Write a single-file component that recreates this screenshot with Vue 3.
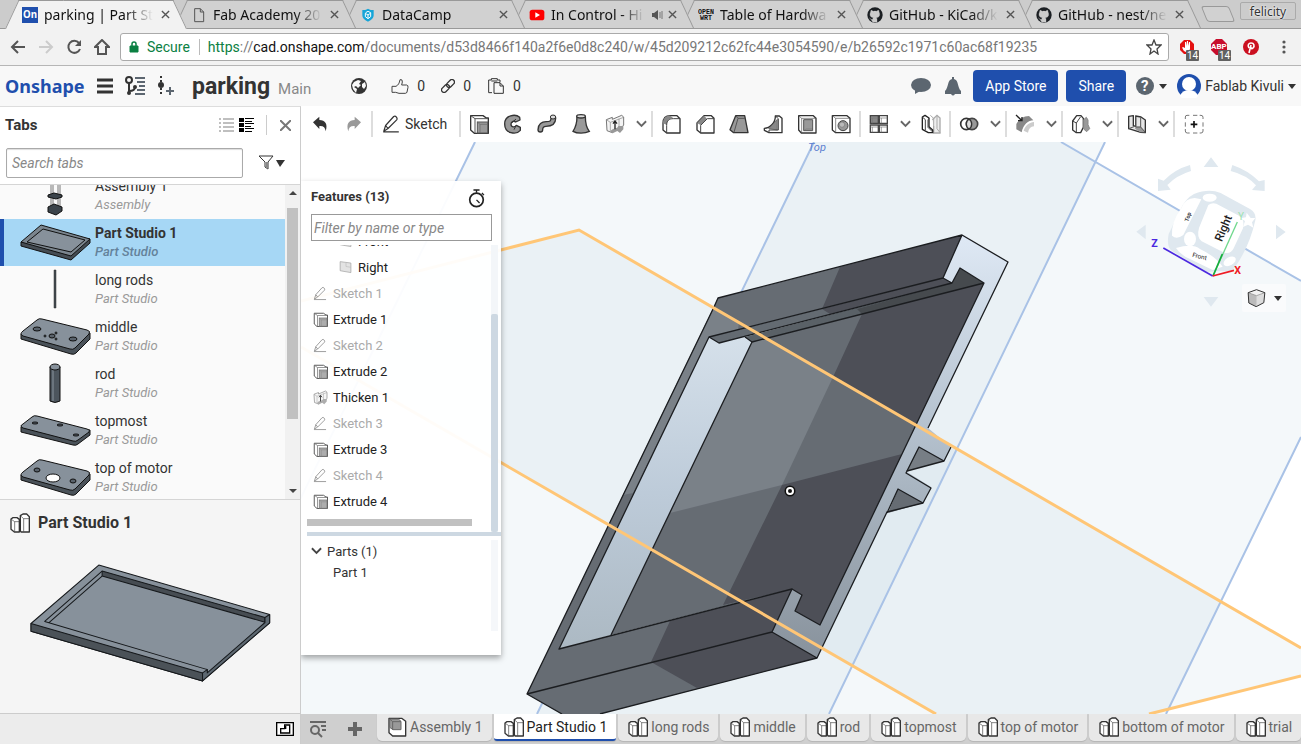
<script setup>
import { ref } from 'vue'

const searchText = ref('')
const filterText = ref('')

const browserTabs = [
  { title: 'parking | Part St', icon: 'onshape', active: true },
  { title: 'Fab Academy 20', icon: 'page' },
  { title: 'DataCamp', icon: 'datacamp' },
  { title: 'In Control - Hi', icon: 'youtube', audio: true },
  { title: 'Table of Hardwa', icon: 'openwrt' },
  { title: 'GitHub - KiCad/k', icon: 'github' },
  { title: 'GitHub - nest/ne', icon: 'github' }
]

const favicons = {
  onshape: '<rect width="48" height="48" fill="#1f4fad"/><text x="3" y="34" font-family="Open Sans, sans-serif" font-size="29" font-weight="700" fill="#fff">On</text>',
  page: '<path d="M11 5h17l10 10v29H11zM28 5v10h10" fill="none" stroke="#555" stroke-width="3"/>',
  datacamp: '<path d="M24 5c6 4 11 4 17 4v16c0 9-8 15-17 19C15 40 7 34 7 25V9c6 0 11 0 17-4z" fill="#15a5d8"/><path d="M17 17l7-4 8 4v12l-8 6-8-6V19l8 5v10m0-10 7-5" fill="none" stroke="#fff" stroke-width="3"/>',
  youtube: '<rect x="2" y="8" width="44" height="32" rx="8" fill="#f00"/><path d="M19 16l14 8-14 8z" fill="#fff"/>',
  openwrt: '<g font-family="Liberation Mono, monospace" font-size="20" font-weight="700" fill="#111"><text x="0" y="20">OPEN</text><text x="6" y="40">WRT</text></g>',
  github: '<circle cx="24" cy="24" r="23" fill="#1b1f23"/><path d="M18 46v-9c-8 2-8-4-11-5M30 46v-9c0-2-1-4-2-5 8-1 10-5 10-10 0-3-1-5-2-7 0-2 0-4-1-5-3 0-5 2-7 3-3-1-6-1-9 0-2-1-4-3-7-3-1 2-1 4-1 5-1 2-2 4-2 7 0 5 2 9 10 10-1 1-2 3-1 5v9" fill="#ccc" stroke="#ccc" stroke-width="1"/>'
}

const icons = {
  extrude: '<path d="M5 5h37l10 7h6v46H16L5 48z" fill="#fff" stroke="#333" stroke-width="4" stroke-linejoin="round"/><path d="M5 5l13 9h38M18 14v44" fill="none" stroke="#555" stroke-width="3"/><rect x="25" y="24" width="31" height="33" fill="#999" stroke="#555" stroke-width="3"/><path d="M25 24l8 7h23M33 31v26" fill="none" stroke="#666" stroke-width="2"/>',
  revolve: '<path d="M50 10C38-1 5 2 5 30c0 29 34 34 47 19v-9l-12-6c-5 7-16 6-16-3 0-8 8-12 14-7l13-6z" fill="#999" stroke="#333" stroke-width="4" stroke-linejoin="round"/><path d="M39 15 27 26m12 9-6 12" stroke="#333" stroke-width="3" fill="none"/>',
  sweep: '<path d="M10 47c0-12 8-17 17-17 14 0 22-3 22-17" fill="none" stroke="#333" stroke-width="18" stroke-linecap="round"/><path d="M10 47c0-12 8-17 17-17 14 0 22-3 22-17" fill="none" stroke="#999" stroke-width="10" stroke-linecap="round"/><ellipse cx="48" cy="9" rx="8" ry="6" fill="#ddd" stroke="#333" stroke-width="3"/>',
  loft: '<path d="M18 7C18 28 13 42 6 52c12 7 36 7 49 0C46 42 43 28 43 7" fill="#999" stroke="#333" stroke-width="4"/><ellipse cx="30" cy="7" rx="13" ry="5" fill="#ddd" stroke="#333" stroke-width="4"/>',
  thicken: '<path d="M4 17l18-7v6L50 4l6 5v24L44 48l-8-5-14 13-16-6z" fill="#f4f4f4" stroke="#777" stroke-width="3" stroke-linejoin="round"/><path d="M16 54c4-14 20-6 24-18h15v10L45 57l-8-6-14 7z" fill="#999"/><path d="M4 17l12 8 16-6 24-9M16 25v26M42 14v22" fill="none" stroke="#888" stroke-width="2"/><path d="M30 46V21m-6 8 6-8 6 8" fill="none" stroke="#222" stroke-width="4"/>',
  fillet: '<path d="M6 28C6 10 16 5 28 5h20l9 9v43H17L6 48z" fill="#fff" stroke="#333" stroke-width="4" stroke-linejoin="round"/><path d="M6 28C6 10 16 5 28 5l9 8c-14 0-19 8-19 20z" fill="#888"/><path d="M17 57V34c0-14 7-20 20-20h20" fill="none" stroke="#444" stroke-width="3"/>',
  chamfer: '<path d="M6 27 27 5h22l8 8v44H17L6 48z" fill="#fff" stroke="#333" stroke-width="4" stroke-linejoin="round"/><path d="M6 27 27 5l9 9-18 20z" fill="#888"/><path d="M17 57V34l20-20h20" fill="none" stroke="#444" stroke-width="3"/>',
  draft: '<path d="M20 5h27l10 51H14L3 47z" fill="#999" stroke="#333" stroke-width="4" stroke-linejoin="round"/><path d="M20 5l7 8h22M27 13 15 55" fill="none" stroke="#555" stroke-width="3"/>',
  rib: '<path d="M4 43c17 0 34-18 33-37h12l8 7v43H18L4 49z" fill="#fff" stroke="#333" stroke-width="4" stroke-linejoin="round"/><path d="M17 44 43 16v32z" fill="#888" stroke="#555" stroke-width="2"/><path d="M37 6l9 8v34H18v8" fill="none" stroke="#444" stroke-width="3"/>',
  shell: '<path d="M5 5h44l8 8v44H13L5 48z" fill="#fff" stroke="#333" stroke-width="4" stroke-linejoin="round"/><path d="M5 5l9 8h43M14 13v44" fill="none" stroke="#555" stroke-width="2"/><path d="M20 17h27v33H20z" fill="#999" stroke="#555" stroke-width="3"/><path d="M20 50l7-5h20" fill="none" stroke="#555"/>',
  hole: '<path d="M4 5h44l9 8v43H14L4 48z" fill="#fff" stroke="#333" stroke-width="4" stroke-linejoin="round"/><path d="M4 5l10 8h43M14 13v43" fill="none" stroke="#555" stroke-width="2"/><circle cx="36" cy="35" r="15" fill="#999" stroke="#444" stroke-width="3"/><circle cx="33" cy="32" r="8" fill="#bbb" stroke="#777" stroke-width="2"/>',
  pattern: '<g fill="#fff" stroke="#444" stroke-width="4"><path d="M4 5h24v23H4z" fill="#888"/><path d="M31 5h24v23H31zM4 33h24v22H4zM31 33h24v22H31z"/></g><path d="M4 12h24M31 12h24M4 39h24M31 39h24M10 12v16M37 12v16M10 39v16M37 39v16" stroke="#777" stroke-width="2"/>',
  mirror: '<path d="M34 17l14-13 9 8v45H38V36" fill="#eee" stroke="#aaa" stroke-width="4"/><path d="M48 4v40l9 12M28 4l10 9v24" fill="none" stroke="#aaa" stroke-width="3"/><path d="M4 9 12 4l12 8v26l11 10v8H22L4 46z" fill="#fff" stroke="#222" stroke-width="4" stroke-linejoin="round"/><path d="M4 9l9 8v31M24 12l-3 6v22l14 14" fill="none" stroke="#444" stroke-width="3"/>',
  bool: '<circle cx="22" cy="30" r="17" fill="#fff" stroke="#333" stroke-width="5"/><circle cx="39" cy="30" r="17" fill="#999" stroke="#444" stroke-width="5"/><path d="M30 15a18 18 0 0 1 0 30 18 18 0 0 1 0-30z" fill="#ddd" stroke="#333" stroke-width="4"/>',
  split: '<path d="M4 30C12 15 26 6 42 6l13 13C40 19 25 31 20 55L4 46z" fill="#888"/><path d="M26 50c4-14 15-24 31-26v13c-10 1-16 7-18 19z" fill="#ccc"/><path d="M3 3l18 17m0-11v11H9" fill="none" stroke="#222" stroke-width="4"/>',
  offset: '<path d="M5 21 17 5h13l7 8v27l-8 16H16L5 48z" fill="#fff" stroke="#333" stroke-width="4" stroke-linejoin="round"/><path d="M5 21l11 6 13-19M16 27v28" fill="none" stroke="#444" stroke-width="3"/><path d="M38 17l8-7 5 8v14l5 12-9 9-9-8z" fill="#999" stroke="#888" stroke-width="3" stroke-linejoin="round"/>',
  modify: '<path d="M5 7l14-2v30l7 2V6l16 3 13 9v38l-14-1L5 44z" fill="#e6e6e6" stroke="#333" stroke-width="4" stroke-linejoin="round"/><path d="M26 38h15l14 17H40L24 44z" fill="#999"/><path d="M26 6v33h15l14 16M41 10v29M5 44l16-6" fill="none" stroke="#555" stroke-width="3"/>',
  add: '<path d="M4 15V9q0-5 5-5h7m11 0h13m7 0h4q6 0 6 6v5m0 10v13m0 7v6q0 6-6 6h-4m-7 0H27m-10 0h-7q-6 0-6-6v-6m0-7V25" fill="none" stroke="#777" stroke-width="3"/><path d="M30 21v20M20 31h20" stroke="#111" stroke-width="5"/>',
  sketch: '<path d="M4 56h52M6 54l6-19L39 5q5-3 9 2t1 9L20 45zM12 35l8 10" fill="none" stroke="#333" stroke-width="4" stroke-linejoin="round"/>',
  undo: '<path d="M9 25 28 8v10c18 0 26 12 19 34-1-12-7-17-19-16v9z" fill="#333"/>',
  redo: '<path d="M51 25 32 8v10C14 18 6 30 13 52c1-12 7-17 19-16v9z" fill="#999"/>',
  part: '<path d="M3 18 9 14h12l7 5V57H13L3 49zM31 8l8-5h11l8 8v46H33l-2-4z" fill="#fff" stroke="#333" stroke-width="4" stroke-linejoin="round"/><path d="M4 19l10 7h13M14 26v30M32 9l9 8h16M41 17v39" fill="none" stroke="#444" stroke-width="2"/>',
  assembly: '<path d="M6 4h38l12 9v44H17L6 47z" fill="#fff" stroke="#333" stroke-width="4" stroke-linejoin="round"/><path d="M8 6h26l8 7v25H18L8 31z" fill="#999" stroke="#666" stroke-width="3"/><path d="M8 6l9 8h25M17 14v24" fill="none" stroke="#666" stroke-width="3"/>',
  plane: '<path d="M5 7l46 6v41L5 46z" fill="#ddd" stroke="#888" stroke-width="3"/><path d="M30 12v16l20 3" fill="none" stroke="#999" stroke-width="2"/>'
}

const toolGroups = [
  ['extrude', 'revolve', 'sweep', 'loft', 'thicken', 'chev'],
  ['fillet', 'chamfer', 'draft', 'rib', 'shell', 'hole'],
  ['pattern', 'chev', 'mirror'],
  ['bool', 'chev'],
  ['split', 'chev'],
  ['offset', 'chev'],
  ['modify', 'chev']
]

const plate = (holes) =>
  `<path d="M1 18v5l50 15q3 1 5-1L70 23v-6z" fill="#4a5259" stroke="#111"/><path d="M3 15 17 4q2-2 5-1l45 11q4 1 2 4L55 32q-2 2-5 1L3 20q-4-2 0-5z" fill="#87919b" stroke="#111"/>${holes}`
const hole = (x, y, rx, ry) => `<ellipse cx="${x}" cy="${y}" rx="${rx}" ry="${ry}" fill="#59626b" stroke="#111"/>`

const thumbs = {
  assembly: '<path d="M31 0v34m2-34v34m5-34v34m2-34v34" stroke="#777"/><path d="M28 20l6-2 8 2v2l-6 2-8-2zM28 32l6-3 8 3v4l-6 4-8-3z" fill="#3b434a" stroke="#111"/>',
  tray: '<path d="M1 20v4l50 14 19-17v-4z" fill="#454c53" stroke="#111"/><path d="M1 20 21 3l49 14-19 17z" fill="#7b858e" stroke="#111"/><path d="M7 20 23 7l42 11-14 12z" fill="#87919b" stroke="#111"/>',
  longrod: '<path d="M34 1h2v38h-2z" fill="#414a50" stroke="#333" stroke-width=".5"/>',
  middle: plate(hole(17, 13, 4, 2) + hole(53, 23, 4, 2) + hole(32, 20, 3, 2) + hole(25, 20, 1, 1) + hole(36, 17, 1, 1) + hole(36, 23, 1, 1)),
  rod: '<path d="M30 4v34q5 3 10 0V4z" fill="#4c555d" stroke="#111"/><path d="M33 6v32" stroke="#6b757e" stroke-width="2"/><ellipse cx="35" cy="4" rx="5" ry="3" fill="#87919b" stroke="#111"/>',
  topmost: '<path d="M1 17v5l52 13q3 1 5-1l12-9v-5z" fill="#4a5259" stroke="#111"/><path d="M3 14 12 7q2-2 5-1l50 13q4 1 2 3l-11 8q-2 2-5 1L3 18q-4-2 0-4z" fill="#87919b" stroke="#111"/>' + hole(15, 13, 3, 1) + hole(40, 15, 3, 1) + hole(56, 25, 3, 1),
  motor: plate(hole(17, 13, 3, 2) + hole(53, 24, 3, 2) + '<ellipse cx="33" cy="21" rx="7" ry="4" fill="#fff" stroke="#111"/>')
}

const docs = [
  { name: 'Assembly 1', kind: 'Assembly', thumb: 'assembly' },
  { name: 'Part Studio 1', kind: 'Part Studio', thumb: 'tray', active: true },
  { name: 'long rods', kind: 'Part Studio', thumb: 'longrod' },
  { name: 'middle', kind: 'Part Studio', thumb: 'middle' },
  { name: 'rod', kind: 'Part Studio', thumb: 'rod' },
  { name: 'topmost', kind: 'Part Studio', thumb: 'topmost' },
  { name: 'top of motor', kind: 'Part Studio', thumb: 'motor' }
]

const features = [
  { name: 'Front', icon: 'plane', nested: true },
  { name: 'Right', icon: 'plane', nested: true },
  { name: 'Sketch 1', icon: 'sketch', dim: true },
  { name: 'Extrude 1', icon: 'extrude' },
  { name: 'Sketch 2', icon: 'sketch', dim: true },
  { name: 'Extrude 2', icon: 'extrude' },
  { name: 'Thicken 1', icon: 'thicken' },
  { name: 'Sketch 3', icon: 'sketch', dim: true },
  { name: 'Extrude 3', icon: 'extrude' },
  { name: 'Sketch 4', icon: 'sketch', dim: true },
  { name: 'Extrude 4', icon: 'extrude' }
]

const pageTabs = ['Assembly 1', 'Part Studio 1', 'long rods', 'middle', 'rod', 'topmost', 'top of motor', 'bottom of motor', 'trial']
</script>

<template>
  <div class="window">
    <div class="tabstrip">
      <div class="browser-tabs">
        <div v-for="(t, i) in browserTabs" :key="i" class="btab" :class="{ active: t.active }" :style="{ zIndex: 10 - i }">
          <svg class="favicon" viewBox="0 0 48 48" v-html="favicons[t.icon]"></svg>
          <span class="btitle">{{ t.title }}</span>
          <svg v-if="t.audio" class="audio" viewBox="0 0 12 12"><path d="M1 4h2l4-3v10L3 8H1z" fill="#555" /><path d="M9 3v6M11 2v8" stroke="#777" /></svg>
          <button class="bclose" aria-label="Close tab"><svg viewBox="0 0 10 10"><path d="M1 1l8 8M9 1 1 9" stroke="#555" stroke-width="1.5" /></svg></button>
        </div>
      </div>
      <button class="newtab" aria-label="New tab"></button>
      <button class="profile">felicity</button>
    </div>

    <div class="navbar">
      <button class="nav" aria-label="Back"><svg viewBox="0 0 16 16"><path d="M15 8H2m6-6L2 8l6 6" fill="none" stroke="#555" stroke-width="2" /></svg></button>
      <button class="nav" aria-label="Forward"><svg viewBox="0 0 16 16"><path d="M1 8h13M8 2l6 6-6 6" fill="none" stroke="#ccc" stroke-width="2" /></svg></button>
      <button class="nav" aria-label="Reload"><svg viewBox="0 0 16 16"><path d="M13 4a6 6 0 1 0 1 6" fill="none" stroke="#555" stroke-width="2" /><path d="M15 1v6H9z" fill="#555" /></svg></button>
      <button class="nav" aria-label="Home"><svg viewBox="0 0 16 16"><path d="M8 1 1 8h3v7h8V8h3z" fill="none" stroke="#555" stroke-width="2" /></svg></button>
      <div class="address">
        <svg class="lock" viewBox="0 0 10 12"><path d="M1 5h8v6H1z" fill="#0b8043" stroke="#0b8043" /><path d="M3 5V3a2 2 0 0 1 4 0v2" fill="none" stroke="#0b8043" stroke-width="1.5" /></svg>
        <span class="secure">Secure</span>
        <span class="url"><span class="scheme">https</span>://<b>cad.onshape.com</b>/documents/d53d8466f140a2f6e0d8c240/w/45d209212c62fc44e3054590/e/b26592c1971c60ac68f19235</span>
        <button class="star" aria-label="Bookmark"><svg viewBox="0 0 16 16"><path d="M8 1l2 5h5l-4 4 1 5-4-3-4 3 1-5-4-4h5z" fill="none" stroke="#444" stroke-width="1.3" /></svg></button>
      </div>
      <button class="ext first" aria-label="AdBlock"><svg viewBox="0 0 16 16"><path d="M5 1h6l4 4v6l-4 4H5l-4-4V5z" fill="#e41111" /><path d="M5 12c-2-3-2-4-1-4l2 1V3h1v4l1-5h1v5l1-4h1v7l-2 4" fill="#fff" /></svg><span class="count">14</span></button>
      <button class="ext" aria-label="Adblock Plus"><svg viewBox="0 0 16 16"><path d="M5 0h6l5 5v6l-5 5H5l-5-5V5z" fill="#c70d2c" /><text x="0" y="10" font-family="Roboto, sans-serif" font-size="8" font-weight="700" fill="#fff">ABP</text></svg><span class="count">14</span></button>
      <button class="ext" aria-label="Pinterest"><svg viewBox="0 0 16 16"><circle cx="8" cy="8" r="8" fill="#cb1020" /><path d="M6 9C4 6 6 4 8 4c3 0 4 3 2 5-1 1-2 1-2-1M8 6l-2 8" fill="none" stroke="#fff" stroke-width="1.6" /></svg></button>
      <button class="dots" aria-label="Menu"><svg viewBox="0 0 4 16"><g fill="#555"><circle cx="2" cy="3" r="1.600" /><circle cx="2" cy="8" r="1.600" /><circle cx="2" cy="13" r="1.600" /></g></svg></button>
    </div>

    <header class="header">
      <a class="brand" href="#">Onshape</a>
      <button class="hbtn" aria-label="Menu"><svg class="i20" viewBox="0 0 20 20"><path d="M2 4h16M2 10h16M2 16h16" stroke="#333" stroke-width="3" /></svg></button>
      <button class="hbtn" aria-label="Versions"><svg class="i20" viewBox="0 0 20 20"><circle cx="4" cy="4" r="3" fill="none" stroke="#333" stroke-width="2" /><circle cx="4" cy="17" r="2" fill="#333" /><circle cx="10" cy="11" r="2" fill="#333" /><path d="M4 7v9M10 11q0 4-6 4" fill="none" stroke="#333" stroke-width="2" /><path d="M10 2h10M12 6h8M14 10h6M12 14h8M10 18h10" stroke="#5c6670" stroke-width="2" /></svg></button>
      <button class="hbtn" aria-label="Create version"><svg class="i20" viewBox="0 0 20 20"><path d="M6 0v20" stroke="#333" stroke-width="2" stroke-dasharray="2 2" /><circle cx="6" cy="9" r="3" fill="#333" /><path d="M15 11v8M11 15h8" stroke="#5c6670" stroke-width="2" /></svg></button>
      <h1>parking</h1><span class="branch">Main</span>
      <div class="stats">
        <svg class="globe" viewBox="0 0 16 16"><circle cx="8" cy="8" r="8" fill="#333" /><path d="M3 4l4-2 3 1-2 3 2 1-3 3-2-2-2 1 3 2-1 4-3-4-1-4zM11 6l3-2 1 4-2 3-2-2z" fill="#f8f8f8" /></svg>
        <button class="stat"><svg class="thumb" viewBox="0 0 54 48"><path d="M3 25h12c7-4 10-9 12-20q8-2 7 7l-2 9h15q5 1 4 7l-3 14q-1 4-5 4H24L14 43H3z" fill="none" stroke="#444" stroke-width="3" /></svg>0</button>
        <button class="stat"><svg class="link" viewBox="0 0 14 14"><g fill="none" stroke="#333" stroke-width="1.300"><rect x="5" y="2" width="9" height="5" rx="2.500" transform="rotate(-45 9.500 4.500)" /><rect x="0" y="7" width="9" height="5" rx="2.500" transform="rotate(-45 4.500 9.500)" /></g></svg>0</button>
        <button class="stat"><svg class="copy" viewBox="0 0 48 48"><path d="M12 44H2V6h8V2h18v4h8v6" fill="none" stroke="#333" stroke-width="3" /><path d="M18 14h18l10 10v22H18zM36 14v10h10M10 9h18" fill="#f8f8f8" stroke="#333" stroke-width="3" /></svg>0</button>
      </div>
      <div class="account">
        <button class="hbtn" aria-label="Comments"><svg class="i20" viewBox="0 0 20 20"><ellipse cx="10" cy="9" rx="10" ry="7" fill="#5c6670" /><path d="M4 12v6l7-4z" fill="#5c6670" /></svg></button>
        <button class="hbtn bell" aria-label="Notifications"><svg class="i20" viewBox="0 0 20 20"><path d="M9 1h2v2c5 1 3 8 7 12v3H2v-3c4-4 2-11 7-12zM8 18h4q-2 3-4 0" fill="#5c6670" /></svg></button>
        <button class="primary">App Store</button>
        <button class="primary">Share</button>
        <button class="help" aria-label="Help"><svg class="i20" viewBox="0 0 20 20"><circle cx="10" cy="10" r="9" fill="#5c6670" /><text x="6" y="15" font-family="Roboto, sans-serif" font-size="15" font-weight="700" fill="#fff">?</text></svg><i class="caret"></i></button>
        <button class="user"><svg class="avatar" viewBox="0 0 24 24"><circle cx="12" cy="12" r="12" fill="#1f4fad" /><circle cx="12" cy="10" r="7" fill="#fff" /><path d="M3 22q2-6 9-6t9 6l-2 2H5z" fill="#fff" /></svg>Fablab Kivuli<i class="caret"></i></button>
      </div>
    </header>

    <main class="body">
      <aside class="sidebar">
        <div class="side-head">
          <h2>Tabs</h2>
          <button class="view" aria-label="Compact list"><svg class="i15" viewBox="0 0 15 15"><path d="M0 1h2M4 1h11M0 5h2M4 5h11M0 9h2M4 9h11M0 13h2M4 13h11" stroke="#aaa" stroke-width="1.500" /></svg></button>
          <button class="view" aria-label="Detailed list"><svg class="i15" viewBox="0 0 15 15"><path d="M0 0h5v4H0zM0 5h5v4H0zM0 10h5v4H0z" fill="#000" /><path d="M6 .5h9M6 3.500h7M6 5.500h9M6 8.500h6M6 10.500h9M6 13.500h7" stroke="#000" /></svg></button>
          <button class="close" aria-label="Close panel"><svg viewBox="0 0 10 10"><path d="M0 0l10 10M10 0 0 10" stroke="#777" stroke-width="1.800" /></svg></button>
        </div>
        <div class="side-search">
          <input v-model="searchText" type="text" placeholder="Search tabs" aria-label="Search tabs" />
          <button class="filter" aria-label="Filter"><svg viewBox="0 0 28 16"><path d="M1 1h14l-5 6v7l-3-2V7z" fill="#fff" stroke="#333" /><path d="M8 7h2v7l-2-2z" fill="#888" /><path d="M18 5h9l-5 7z" fill="#333" /></svg></button>
        </div>
        <div class="doc-pane">
          <ul class="doc-list">
            <li v-for="d in docs" :key="d.name" :class="{ active: d.active }">
              <svg class="doc-thumb" viewBox="0 0 71 41" v-html="thumbs[d.thumb]"></svg>
              <div class="doc-text"><div class="doc-name">{{ d.name }}</div><div class="doc-kind">{{ d.kind }}</div></div>
            </li>
          </ul>
          <div class="scrollbar"><i class="up"></i><div class="track"><div class="handle"></div></div><i class="down"></i></div>
        </div>
        <section class="preview">
          <h3><svg class="i20" viewBox="0 0 60 60" v-html="icons.part"></svg>Part Studio 1</h3>
          <svg class="preview-art" viewBox="80 180 740 380">
            <g stroke="#15181b" stroke-width="3" stroke-linejoin="round">
              <path d="M92 370 295 195 807 343v25L606 542 92 393z" fill="#87919b" />
              <path d="M92 370v23l514 149v-24z" fill="#4b5258" />
              <path d="M305 213v15l488 138v-14z" fill="#464c52" />
              <path d="M305 213 133 364l480 142 7 2v13M305 228 145 368" fill="none" />
              <path d="M606 518v24l201-174v-25l-14 9v15L620 518v-10z" fill="#5d6871" />
            </g>
          </svg>
        </section>
        <div class="side-foot"><svg viewBox="0 0 54 42"><path d="M2 2h50v38H2z" fill="#fff" stroke="#000" stroke-width="4" /><path d="M14 20h12V9h15v24H14zM29 12v9" fill="none" stroke="#000" stroke-width="4" /></svg></div>
      </aside>

      <section class="work">
        <div class="toolbar">
          <button class="tool" aria-label="Undo"><svg class="i20" viewBox="0 0 60 60" v-html="icons.undo"></svg></button>
          <button class="tool" aria-label="Redo"><svg class="i20" viewBox="0 0 60 60" v-html="icons.redo"></svg></button>
          <button class="tool-sketch"><svg class="i18" viewBox="0 0 60 60" v-html="icons.sketch"></svg>Sketch</button>
          <div v-for="(g, gi) in toolGroups" :key="gi" class="group">
            <button v-for="(n, ni) in g" :key="ni" :class="n === 'chev' ? 'chev' : 'tool'" :aria-label="n === 'chev' ? 'More' : n">
              <svg v-if="n === 'chev'" viewBox="0 0 12 8"><path d="M1 1l5 5 5-5" fill="none" stroke="#666" stroke-width="2" /></svg>
              <svg v-else class="i20" viewBox="0 0 60 60" v-html="icons[n]"></svg>
            </button>
          </div>
          <button class="tool add" aria-label="Add tool"><svg class="i20" viewBox="0 0 60 60" v-html="icons.add"></svg></button>
        </div>

        <div class="canvas">
          <svg class="scene" viewBox="301 142 1000 572" preserveAspectRatio="xMinYMin slice">
            <defs>
              <linearGradient id="wall" x1="0" y1="0" x2="0" y2="1"><stop offset="0" stop-color="#d5e0ea" /><stop offset=".5" stop-color="#bdcbd9" /><stop offset="1" stop-color="#acb9c3" /></linearGradient>
              <linearGradient id="end" x1="0" y1="0" x2="0" y2="1"><stop offset="0" stop-color="#dfe9f5" /><stop offset=".4" stop-color="#b9c6d3" /><stop offset="1" stop-color="#88929c" /></linearGradient>
            </defs>
            <g fill="#90b7cd" fill-opacity=".1">
              <path d="M475 142h630L829 714H195z" />
              <path d="M814 142h247l240 139v156L1166 714H537z" />
              <path d="M579 230l722 418v28l-152 38H936L301 347v-46z" />
            </g>
            <g fill="none" stroke="#a9c2e6" stroke-width="2">
              <path d="M475 142 195 714M814 142 537 714M1105 142 829 714M1061 142l240 139M1301 437 1166 714" />
            </g>
            <text class="plane-label" transform="translate(808 151)">Top</text>

            <path d="M718 298l244-63-19 43-234 59-150 312 233-60-20 43-245 62z" fill="#666c73" />
            <path d="M714 308l25 14-1 8-29 7-76 156-10 2z" fill="#7a8188" />
            <path d="M840 267l122-32-19 43-121 31zM670 621l122-32-20 43-121 30z" fill="#4d4f57" />
            <path d="M527 694l245-62 45 26-217 56h-38z" fill="#666c73" />
            <path d="M651 662l121-30 45 26-120 30z" fill="#4d4f57" />
            <path d="M752 342l232-59-164 342-25-14 7-16-10-6-181 46z" fill="#666c73" />
            <path d="M752 342l16-4 65 39-51 108-112 28z" fill="#7a8188" />
            <path d="M862 314l122-31-67 142-84-48zM782 485l120-31-82 171-25-14 7-16-10-6-69 16z" fill="#4d4f57" />
            <path d="M709 337l10 6 26-6 7 5-141 293-52 14z" fill="url(#wall)" />
            <path d="M709 337l234-59 9 5-233 60z" fill="#646b72" />
            <path d="M822 309l121-31 9 5-122 31z" fill="#4d4f57" />
            <path d="M745 337l207-54 8-15 24 15-232 59z" fill="#5a6167" />
            <path d="M857 309l95-26 8-15 24 15-122 31z" fill="#464a4e" />
            <path d="M962 235l46 27-80 166 23 19-7 14-25-14-12 25 24 15-8 16-25-14-11 23L817 658l-45-26 20-43 10 6-7 16 25 14 164-342-24-15-8 15-9-5z" fill="url(#end)" />
            <path d="M919 447l25 14-37 10z" fill="#777e85" />
            <path d="M898 489l25 14-35 10z" fill="#666c73" />
            <g fill="none" stroke="#1b1d20" stroke-width="1.300" stroke-linejoin="round">
              <path d="M562 714l-35-20 187-387 4-9 244-63 46 27-80 166M951 447l-7 14-37 10-1 2 25 15-8 15-36 9L817 658l-217 56M527 694l245-62 45 26M772 632l20-43-233 60 150-312 234-59 19-43" />
              <path d="M709 337l10 6 233-60 8-15 24 15-164 342-25-14 7-16-10-6M943 278l9 5M745 337l7 5 232-59M752 342 611 635M944 461l-25-14-12 24M923 503l-25-14-11 24" />
            </g>
            <g fill="none" stroke="#ffc676" stroke-width="3"><path d="M301 301l278-71 722 418M301 347l635 367M1149 714l152-38" /></g>
            <circle cx="790" cy="491" r="4" fill="#111" stroke="#111" stroke-width="3" /><circle cx="790" cy="491" r="3" fill="#111" stroke="#fff" stroke-width="2" />
          </svg>

          <svg class="cube" viewBox="0 6 603 564">
            <g fill="#dfe8ef">
              <path d="M333 52l22 29h-44zM333 500l22-29h-44zM109 275l28-21v44zM557 276l-29-22v44z" />
              <path d="M270 75q-46 13-79 47l-17-6v37l38-4-10-14q28-29 71-42zM397 75q47 16 80 49l17-4v33l-38-3 12-14q-28-31-76-43z" />
              <path d="M282 162q45-18 80-3l88 48q20 12 16 34-18 80-61 140-10 16-40 12l-47 3-103-64q-16-12-9-50l34-70q15-36 42-50z" />
            </g>
            <g fill="#fff">
              <path d="M244 204q12-30 40-30l20 4-54 107q-20 15-34 2-3-40 28-83z" />
              <path d="M325 195q10-8 24-4l68 36q18 10 12 38l-28 60q-8 18-28 13l-68-34q-16-12-8-40z" />
              <path d="M228 324q50-15 72 3 48 23 68 53l-30 10-82-40q-20-12-28-26z" />
              <ellipse cx="329" cy="173" rx="21" ry="12" /><ellipse cx="270" cy="297" rx="18" ry="22" /><ellipse cx="389" cy="364" rx="20" ry="12" transform="rotate(-30 389 364)" />
              <path d="M440 218l12 16 14 0-10 13 4 16-16-9-15 7 6-18-14-8 17-3z" />
            </g>
            <path d="M412 246 340 406" stroke="#70d88d" stroke-width="4" /><path d="M367 342 339 408" stroke="#16ac3d" stroke-width="5" />
            <path d="M190 324 338 408" stroke="#4b28e0" stroke-width="5" /><path d="M338 408l64-17" stroke="#ef1b24" stroke-width="5" />
            <g class="cube-text">
              <text x="0" y="0" font-size="35" font-weight="500" fill="#222" transform="translate(365 307) rotate(-67)">Right</text>
              <text x="0" y="0" font-size="19" fill="#222" transform="translate(276 350) rotate(14)">Front</text>
              <text x="0" y="0" font-size="17" font-weight="700" fill="#333" transform="translate(265 246) rotate(-72)">Top</text>
              <text x="154" y="320" font-size="32" font-weight="700" fill="#4b28e0">Z</text>
              <text x="403" y="401" font-size="32" font-weight="700" fill="#ef1b24">X</text>
              <text x="414" y="239" font-size="30" fill="#9be2ae">Y</text>
            </g>
          </svg>
          <button class="shade" aria-label="Display style"><svg viewBox="0 0 54 54"><path d="M2 11 27 2l25 9-3 30-23 12L4 42z" fill="#ddd" /><path d="M2 11l25-9 25 9-25 9z" fill="#f2f2f2" /><path d="M2 11l25 9v32L4 42z" fill="#bbb" /><path d="M2 11l25 9 25-9" fill="none" stroke="#888" stroke-width="2" /><path d="M2 11 27 2l25 9-3 30-23 12L4 42z" fill="none" stroke="#333" stroke-width="3" /></svg><i class="caret"></i></button>

          <div class="features">
            <div class="feat-head"><h2>Features (13)</h2><svg class="timer" viewBox="0 0 50 56"><circle cx="25" cy="32" r="20" fill="none" stroke="#222" stroke-width="5" /><path d="M16 3h18M25 3v8M41 12l6 6M25 32l9 9" stroke="#222" stroke-width="4" /></svg></div>
            <input v-model="filterText" type="text" placeholder="Filter by name or type" aria-label="Filter by name or type" />
            <div class="feat-pane">
              <ul class="feat-list">
                <li v-for="f in features" :key="f.name" :class="{ dim: f.dim, nested: f.nested }"><svg class="i15" viewBox="0 0 60 60" v-html="icons[f.icon]"></svg>{{ f.name }}</li>
              </ul>
              <div class="feat-track"><div class="feat-handle"></div></div>
            </div>
            <div class="parts">
              <div class="parts-text"><button class="parts-head"><svg viewBox="0 0 12 8"><path d="M1 1l5 5 5-5" fill="none" stroke="#444" stroke-width="2" /></svg>Parts (1)</button><div class="part">Part 1</div></div>
              <div class="parts-track"></div>
            </div>
          </div>
        </div>

        <nav class="page-tabs">
          <button class="pt-tool" aria-label="Tab manager"><svg class="i18" viewBox="0 0 18 18"><path d="M1 2h16M12 6h5M13 10h4" stroke="#666" stroke-width="2" /><circle cx="6" cy="10" r="4" fill="none" stroke="#666" stroke-width="2" /><path d="M9 13l4 4" stroke="#666" stroke-width="2" /></svg></button>
          <button class="pt-tool" aria-label="Add tab"><svg class="i18" viewBox="0 0 18 18"><path d="M9 2v14M2 9h14" stroke="#666" stroke-width="4" /></svg></button>
          <button v-for="(p, i) in pageTabs" :key="p" class="ptab" :class="{ active: i === 1 }"><svg class="i20" viewBox="0 0 60 60" v-html="i === 0 ? icons.assembly : icons.part"></svg>{{ p }}</button>
        </nav>
      </section>
    </main>
  </div>
</template>

<style>
body { margin: 0; }
</style>

<style scoped>
* { box-sizing: border-box; }
.window { display: flex; flex-direction: column; height: 100vh; overflow: hidden; font-family: Roboto, "Noto Sans", sans-serif; font-size: 14px; color: #333; background: #fff; }
button { border: 0; padding: 0; margin: 0; background: none; font: inherit; color: inherit; display: flex; align-items: center; justify-content: center; flex: none; }
svg { display: block; flex: none; }
h1, h2, h3, ul { margin: 0; padding: 0; list-style: none; }
.i20 { width: 20px; height: 20px; }
.i18 { width: 18px; height: 18px; }
.i15 { width: 15px; height: 15px; }
.caret { border: 4px solid transparent; border-top: 5px solid #333; border-bottom: 0; }

.tabstrip { height: 29px; flex: none; display: flex; background: #ccc; border-bottom: 1px solid #999; padding-left: 5px; font-family: "Noto Sans", sans-serif; color: #111; }
.browser-tabs { display: flex; flex: 0 1 1183px; min-width: 0; margin-right: 16px; }
.btab { flex: 1 1 0; min-width: 0; position: relative; height: 29px; margin-right: -13px; padding: 0 13px 0 17px; display: flex; align-items: center; }
.btab::before, .btab::after { content: ""; position: absolute; top: 0; bottom: 1px; width: 60%; z-index: -1; background: #d1d1d1; border-top: 1px solid #999; }
.btab::before { left: 0; border-left: 1px solid #999; transform: skewX(-25deg); transform-origin: left bottom; }
.btab::after { right: 0; border-right: 1px solid #999; transform: skewX(25deg); transform-origin: right bottom; }
.btab.active::before, .btab.active::after { background: #f2f2f2; bottom: 0; }
.favicon { width: 16px; height: 16px; margin-right: 6px; }
.btitle { flex: 1; min-width: 0; white-space: nowrap; overflow: hidden; margin-right: 3px; mask-image: linear-gradient(to right, #000 75%, transparent); }
.audio { width: 12px; height: 12px; margin-left: 4px; }
.bclose { width: 18px; height: 18px; }
.bclose svg { width: 9px; height: 9px; }
.newtab { width: 28px; height: 16px; align-self: center; border: 1px solid #999; border-radius: 3px; transform: skewX(22deg); background: #d1d1d1; }
.profile { margin: 2px 5px 0 auto; width: 56px; height: 18px; border: 1px solid #aaa; border-radius: 2px; font-size: 12px; color: #333; text-shadow: 0 0 2px #fff, 0 0 2px #fff; }

.navbar { height: 37px; flex: none; display: flex; align-items: center; background: #f2f2f2; border-bottom: 1px solid #b6b6b6; padding-left: 4px; }
.nav { width: 28px; height: 28px; }
.nav svg { width: 16px; height: 16px; }
.address { flex: 1; min-width: 0; height: 28px; margin-left: 4px; border: 1px solid #aaa; border-radius: 3px; background: #fff; display: flex; align-items: center; color: #777; padding: 0 6px 0 8px; }
.lock { width: 10px; height: 12px; }
.secure { color: #0b8043; margin-left: 8px; padding-right: 9px; border-right: 1px solid #bbb; line-height: 16px; }
.url { flex: 1; min-width: 0; overflow: hidden; white-space: nowrap; margin-left: 8px; }
.url b { font-weight: 400; color: #111; }
.scheme { color: #0b8043; }
.star svg { width: 16px; height: 16px; }
.ext { position: relative; width: 32px; height: 28px; }
.ext.first { margin-left: 2px; }
.ext svg { width: 16px; height: 16px; }
.count { position: absolute; left: 15px; top: 17px; background: #616161; color: #fff; font-size: 10px; line-height: 11px; padding: 0 1px; border-radius: 1px; }
.dots { width: 34px; }
.dots svg { width: 4px; height: 16px; }

.header { height: 40px; flex: none; display: flex; align-items: center; background: #f8f8f8; padding-left: 5px; }
.brand { color: #1f4fad; text-decoration: none; font: 700 18px/24px "Noto Sans", sans-serif; width: 80px; flex: none; }
.hbtn { width: 20px; height: 24px; margin-left: 10px; }
h1 { font-size: 23px; line-height: 28px; font-weight: 700; margin: 2px 0 0 17px; }
.branch { margin: 6px 0 0 8px; font-size: 15px; color: #888; }
.stats { display: flex; align-items: center; margin-left: 40px; }
.globe { width: 16px; height: 16px; margin-right: 24px; }
.stat { gap: 8px; margin-right: 16px; }
.thumb, .copy { width: 18px; height: 16px; }
.link { width: 14px; height: 14px; }
.account { display: flex; align-items: center; margin-left: auto; padding-right: 5px; }
.account .bell { margin-left: 12px; margin-right: 10px; }
.primary { height: 32px; padding: 0 12px; margin-right: 8px; background: #1f4fad; color: #fff; border-radius: 4px; font-size: 14px; }
.help { gap: 4px; margin: 0 10px 0 1px; }
.user { gap: 4px; }
.avatar { width: 24px; height: 24px; }

.body { flex: 1; min-height: 0; display: flex; }
.sidebar { width: 301px; flex: none; display: flex; flex-direction: column; border-right: 1px solid #ccc; background: #fff; border-top: 1px solid #ddd; }
.side-head { height: 36px; flex: none; display: flex; align-items: center; padding: 0 9px 0 5px; }
.side-head h2 { font-size: 15px; flex: 1; }
.view { margin-left: 5px; }
.close { margin-left: 12px; padding-left: 13px; height: 20px; border-left: 1px solid #ccc; }
.close svg { width: 11px; height: 11px; }
.side-search { flex: none; display: flex; align-items: flex-start; padding: 5px 14px 0 6px; height: 41px; }
.side-search input { flex: 1; min-width: 0; height: 30px; border: 1px solid #aaa; border-radius: 2px; padding: 0 5px; font: italic 14px Roboto, sans-serif; box-shadow: inset 0 1px 1px #ddd; }
input::placeholder { color: #888; opacity: 1; }
.filter { margin-left: 15px; height: 30px; }
.filter svg { width: 28px; height: 16px; }
.doc-pane { height: 316px; flex: none; overflow: hidden; display: flex; border-top: 1px solid #d5d5d5; border-bottom: 1px solid #d5d5d5; background: #fafafa; }
.doc-list { flex: 1; margin-top: -13px; }
.doc-list li { height: 47px; display: flex; align-items: center; padding-left: 16px; border-left: 4px solid transparent; }
.doc-list li.active { background: #a6d7f5; border-left-color: #1f4fad; font-weight: 700; }
.doc-thumb { width: 71px; height: 41px; margin-right: 4px; }
.doc-name { line-height: 18px; }
.doc-kind { line-height: 18px; margin-top: 1px; font-size: 13px; font-style: italic; color: #999; font-weight: 400; }
.active .doc-kind { font-weight: 500; color: #64829a; }
.scrollbar { width: 15px; background: #f1f1f1; display: flex; flex-direction: column; align-items: center; padding: 6px 0; }
.up, .down { border: 4px solid transparent; }
.up { border-top: 0; border-bottom: 4px solid #444; }
.down { border-bottom: 0; border-top: 4px solid #444; }
.track { flex: 1; width: 11px; padding-top: 13px; }
.handle { background: #c1c1c1; height: 75%; }
.preview { flex: 1; min-height: 0; background: #f5f5f5; }
.preview h3 { display: flex; align-items: center; gap: 8px; padding: 12px 10px 0; font-size: 16px; line-height: 22px; }
.preview-art { width: 247px; height: 127px; margin: 26px 0 0 27px; }
.side-foot { height: 31px; flex: none; background: #ececec; border-top: 1px solid #ccc; display: flex; align-items: center; justify-content: flex-end; padding-right: 6px; }
.side-foot svg { width: 18px; height: 14px; }

.work { flex: 1; min-width: 0; display: flex; flex-direction: column; }
.toolbar { height: 36px; flex: none; display: flex; align-items: center; padding-left: 2px; }
.tool { width: 34px; height: 30px; }
.tool-sketch { height: 26px; padding: 0 12px 0 9px; gap: 5px; border-left: 2px solid #ddd; border-right: 2px solid #ddd; }
.group { display: flex; height: 26px; align-items: center; padding: 0 1px; border-right: 2px solid #ddd; }
.chev { width: 18px; height: 26px; }
.chev svg { width: 11px; height: 8px; }
.add { margin-left: 2px; }

.canvas { flex: 1; min-height: 0; position: relative; overflow: hidden; background: #fff; }
.scene { width: 100%; height: 100%; }
.plane-label { font: italic 11px Roboto, sans-serif; fill: #5b7fd0; }
.cube { position: absolute; top: 0; right: 0; width: 201px; height: 188px; }
.cube-text { font-family: Roboto, sans-serif; }
.shade { position: absolute; top: 142px; right: 15px; width: 44px; height: 28px; gap: 8px; background: #fafbfc; border-radius: 2px; }
.shade svg { width: 19px; height: 18px; }
.features { position: absolute; left: 0; top: 39px; width: 200px; background: rgba(255, 255, 255, .95); box-shadow: 0 3px 6px rgba(0, 0, 0, .35); padding-left: 6px; font-size: 13px; }
.feat-head { height: 33px; padding: 0 16px 0 4px; display: flex; justify-content: space-between; align-items: center; }
.feat-head h2 { font-size: 13px; line-height: 28px; margin-bottom: 2px; }
.timer { width: 17px; height: 19px; margin-top: 2px; }
.features input { display: block; width: 181px; height: 27px; margin: 0 0 0 4px; border: 1px solid #999; padding: 0 2px; font: italic 14px Roboto, sans-serif; background: #fff; }
.feat-pane { height: 287px; margin-top: 4px; display: flex; justify-content: space-between; overflow: hidden; }
.feat-list { flex: 1; height: 281px; display: flex; flex-direction: column; justify-content: flex-end; padding-bottom: 5px; border-bottom: 7px solid #c1c1c1; margin-right: 19px; overflow: hidden; }
.feat-list li { flex: none; height: 26px; display: flex; align-items: center; gap: 5px; padding-left: 6px; color: #222; white-space: nowrap; }
.feat-list li.nested { padding-left: 32px; }
.feat-list li.nested svg { width: 14px; height: 14px; }
.feat-list li.dim { color: #aaa; }
.feat-list li svg { opacity: .8; }
.feat-list li.dim svg { opacity: .5; width: 14px; margin-right: 1px; }
.feat-track { width: 7px; margin-right: 3px; background: #f3f6f9; display: flex; align-items: flex-end; }
.feat-handle { width: 7px; height: 76%; background: #cdd8e2; border-radius: 2px; }
.parts { height: 123px; border-top: 4px solid #cdd8e2; padding: 4px 3px 24px 0; display: flex; justify-content: space-between; }
.parts-head { gap: 5px; padding-left: 4px; height: 22px; }
.parts-head svg { width: 11px; height: 8px; }
.part { padding-left: 26px; line-height: 22px; }
.parts-track { width: 7px; background: #f5f7fa; }

.page-tabs { height: 30px; flex: none; display: flex; align-items: flex-start; background: #cfcfcf; overflow: hidden; padding-left: 8px; }
.pt-tool { width: 18px; height: 30px; margin-right: 19px; }
.pt-tool + .ptab { margin-left: -6px; }
.ptab { height: 27px; padding: 0 9px 1px 10px; margin-right: 2px; gap: 3px; background: #e8e8e8; color: #666; border-radius: 0 0 5px 5px; box-shadow: 0 1px 1px #b5b5b5; white-space: nowrap; }
.ptab.active { background: #fff; color: #222; border-bottom: 2px solid #1f4fad; border-radius: 0 0 3px 3px; padding-bottom: 0; }
</style>
